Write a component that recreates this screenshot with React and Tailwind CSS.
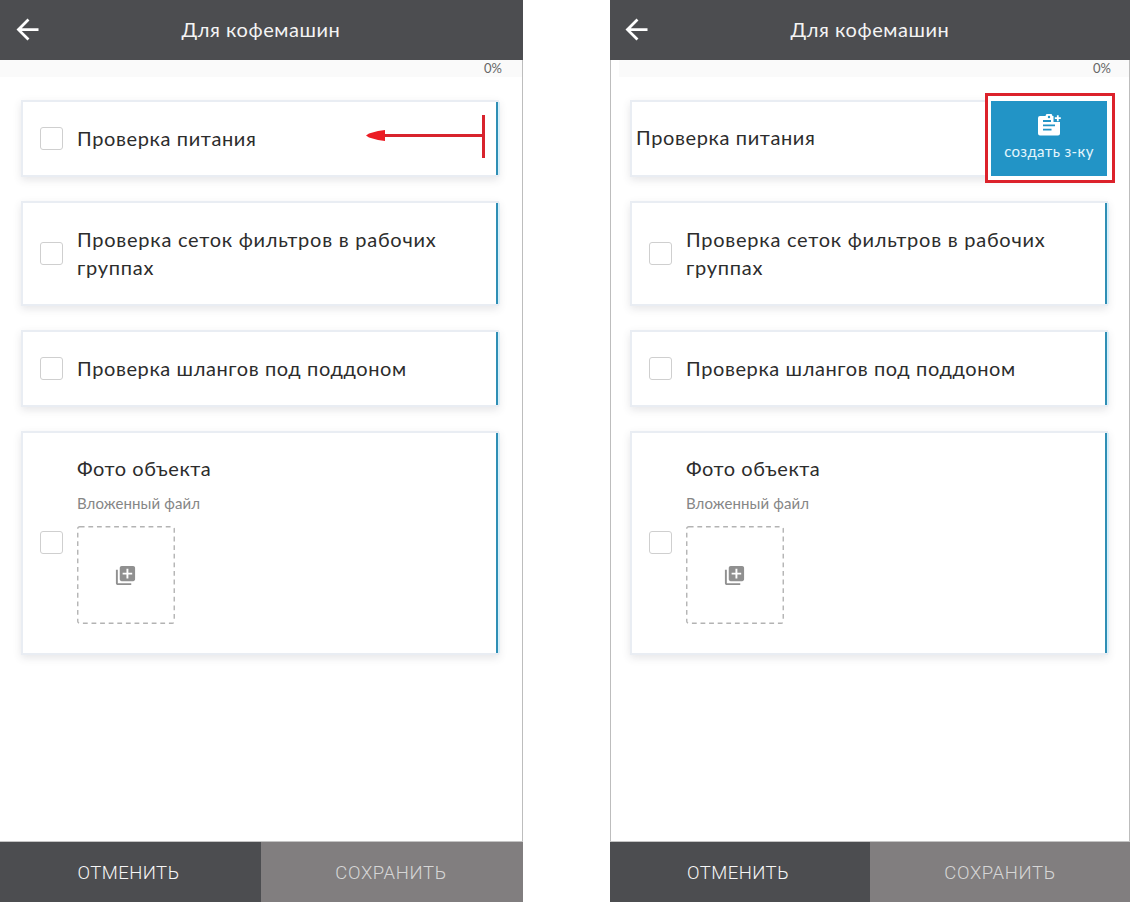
import React from "react";
import { MdArrowBack, MdLibraryAdd } from "react-icons/md";

function Checkbox({ className = "" }) {
  return <span className={`${className} ml-[17px] h-[23px] w-[23px] shrink-0 rounded-[3px] border-[1.5px] border-[#cfcfcf] bg-white`} />;
}

function Card({ height, children, accent = true }) {
  return (
    <div className={`${height} flex w-[478px] border-2 border-r-0 border-[#e9edf3] bg-white shadow-[0_3px_8px_rgba(60,60,80,0.13)]`}>
      <div className="flex min-w-0 flex-1 items-center">{children}</div>
      {accent && <div className="mr-px w-[2px] shrink-0 bg-[#2f8fb5] shadow-[2px_0_0_#d8f0fb]" />}
    </div>
  );
}

function Label({ children, tracking = "tracking-[0.62px]" }) {
  return <div className={`${tracking} -mt-[2px] ml-[14px] text-[20px] leading-[28px] text-[#2c2c2c]`}>{children}</div>;
}

function SwipeArrow() {
  return (
    <svg className="ml-auto mr-[10px] -mt-1 shrink-0" width="120" height="43" viewBox="0 0 120 43">
      <path d="M19 19H117V22H19z M116 0H119V43H116z" fill="#d8232d" />
      <path d="M0 20.5L3 18.5L12 16L19 15V26L12 25L3 22.5z" fill="#ec1c24" />
    </svg>
  );
}

function TaskIcon() {
  return (
    <svg className="ml-px mt-px" width="24" height="22" viewBox="0 0 24 22">
      <path d="M2 2H7.5A3.6 3.6 0 0 1 14.5 2H15.5V8H22V19.5Q22 21.5 20 21.5H2Q0 21.5 0 19.5V4Q0 2 2 2Z" fill="#fff" />
      <circle cx="11" cy="3" r="1.2" fill="#2294c6" />
      <path d="M5 7H13M5 11.3H17M5 15.7H13.5" stroke="#2294c6" strokeWidth="1.8" />
      <path d="M19.8 1.2V7.2M16.8 4.2H22.8" stroke="#fff" strokeWidth="1.8" />
    </svg>
  );
}

function CreateAction() {
  return (
    <div className="absolute -top-[7px] left-[355px] h-[90px] w-[130px] border-[3px] border-[#dc222b] bg-white px-[3px] pt-[5px]">
      <div className="flex h-[75px] w-[116px] flex-col items-center bg-[#2294c6] pt-[12px]">
        <TaskIcon />
        <span className="mt-[5px] whitespace-nowrap text-[15px] leading-5 tracking-[0.38px] text-[#e4f6fd]">создать з-ку</span>
      </div>
    </div>
  );
}

function Phone({ swiped = false }) {
  return (
    <section className={swiped ? "flex h-[902px] w-[520px] flex-col" : "flex h-[902px] w-[523px] flex-col"}>
      <header className="flex h-[60px] shrink-0 items-center bg-[#4c4d50] pb-[2px] text-white">
        <MdArrowBack size={33} className={swiped ? "ml-[10px]" : "ml-[11px]"} />
        <h1 className="ml-[137.5px] text-[20px] leading-7 tracking-[0.55px] text-[#f4f4f4]">Для кофемашин</h1>
      </header>
      <main className={`${swiped ? "border-x pl-[19px]" : "border-r pl-[21px]"} flex flex-1 flex-col border-[#bdbdbd]`}>
        <div className={`${swiped ? "-ml-[11px] pr-[18px]" : "-ml-[21px] pr-[20px]"} flex h-[17px] items-center justify-end bg-[#fafafa] text-[13px] text-[#666]`}>0%</div>
        <div className="mt-[23px] flex flex-col gap-6">
          <div className="relative">
            <Card height="h-[77px]" accent={!swiped}>
              {swiped ? (
                <div className="ml-1 -mt-[4px] text-[20px] leading-[28px] tracking-[0.62px] text-[#2c2c2c]">Проверка питания</div>
              ) : (
                <>
                  <Checkbox />
                  <Label>Проверка питания</Label>
                  <SwipeArrow />
                </>
              )}
            </Card>
            {swiped && <CreateAction />}
          </div>
          <Card height="h-[105px]">
            <Checkbox />
            <Label tracking="tracking-[0.75px]">Проверка сеток фильтров в рабочих<br />группах</Label>
          </Card>
          <Card height="h-[77px]">
            <Checkbox />
            <Label tracking="tracking-[0.6px]">Проверка шлангов под поддоном</Label>
          </Card>
          <Card height="h-[224px]">
            <Checkbox className="-mt-[2px]" />
            <div className="h-full pt-[23px]">
              <Label tracking="tracking-[0.55px]">Фото объекта</Label>
              <div className="ml-[14px] mt-[11px] text-[15px] leading-5 tracking-[0.13px] text-[#868686]">Вложенный файл</div>
              <div className="ml-[14px] mt-[13px] flex h-[98px] w-[98px] items-center justify-center">
                <svg className="shrink-0" width="98" height="98" viewBox="0 0 98 98" fill="none">
                  <rect x="0.75" y="0.75" width="96.5" height="96.5" rx="2" stroke="#b3b3b3" strokeWidth="1.4" strokeDasharray="4.8 3.8" />
                </svg>
                <MdLibraryAdd size={23} className="-ml-[61px] mr-[38px] shrink-0 text-[#909090]" />
              </div>
            </div>
          </Card>
        </div>
      </main>
      <footer className="flex h-[61px] shrink-0 border-t border-[#c4c4c4] font-['Roboto','Inter',sans-serif] text-[18.5px]">
        <button className={`${swiped ? "w-[260px]" : "w-[261px]"} bg-[#4c4d50] pr-[4px] pt-[4px] font-[350] tracking-[0.45px] text-[#f6f6f6]`}>ОТМЕНИТЬ</button>
        <button className={`${swiped ? "pr-0" : "pr-[2px]"} flex-1 bg-[#817e7f] pt-[4px] font-[350] tracking-[0.6px] text-[#d6d6d6]`}>СОХРАНИТЬ</button>
      </footer>
    </section>
  );
}

export default function App() {
  return (
    <div className="flex h-[903px] w-[1131px] gap-[87px] overflow-hidden bg-white font-['Lato','Inter',sans-serif]">
      <Phone />
      <Phone swiped />
    </div>
  );
}
